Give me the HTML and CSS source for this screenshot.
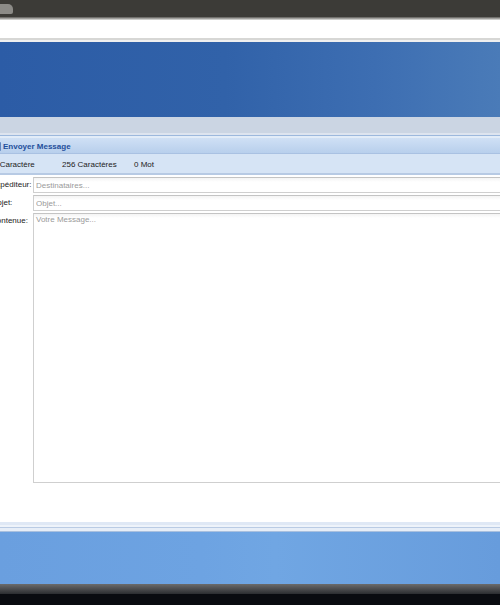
FILE: index.html
```html
<!DOCTYPE html>
<html lang="fr">
<head>
<meta charset="utf-8">
<title>Envoyer Message</title>
<link rel="stylesheet" href="styles.css">
</head>
<body>
<div class="screen">
  <div class="topbar"><span class="tab"></span></div>
  <div class="topsep"></div>
  <div class="addrbar"></div>
  <div class="addrsep"></div>
  <div class="banner"></div>
  <div class="subbar"></div>
  <div class="panel">
    <div class="panel-top"></div>
    <div class="panel-head"><span class="head-icon"></span><span class="head-title">Envoyer Message</span></div>
    <div class="stats">
      <span class="stat stat-first">0 Caractère</span>
      <span class="stat stat-second">256 Caractères</span>
      <span class="stat">0 Mot</span>
    </div>
    <div class="form">
      <div class="row">
        <label class="lbl">Expéditeur:</label>
        <input class="field" type="text" placeholder="Destinataires...">
      </div>
      <div class="row">
        <label class="lbl">Objet:</label>
        <input class="field" type="text" placeholder="Objet...">
      </div>
      <div class="row">
        <label class="lbl">Contenue:</label>
        <textarea class="field area" placeholder="Votre Message..."></textarea>
      </div>
    </div>
    <div class="panel-foot"></div>
  </div>
  <div class="desktop"></div>
  <div class="taskshade"></div>
  <div class="taskbar"></div>
</div>
</body>
</html>
```
FILE: styles.css
```css
html, body {
  margin: 0;
  padding: 0;
  width: 500px;
  height: 605px;
  overflow: hidden;
  background: #ffffff;
  font-family: "Liberation Sans", Arial, sans-serif;
}
.screen {
  display: flex;
  flex-direction: column;
  width: 500px;
  height: 605px;
  overflow: hidden;
}
.topbar {
  height: 17px;
  background: #3c3b37;
  display: flex;
  align-items: flex-start;
}
.tab {
  display: block;
  width: 13px;
  height: 10px;
  margin-top: 4px;
  background: #8c8b87;
  border-radius: 0 5px 2px 0;
}
.topsep {
  height: 3px;
  background: linear-gradient(#5a5955, #e4e4e2);
}
.addrbar {
  height: 18px;
  background: #ffffff;
}
.addrsep {
  height: 4px;
  background: linear-gradient(#d7d7d5 0 2px, #efefef 2px 4px);
}
.banner {
  height: 75px;
  background: linear-gradient(to right, #2c5ca6 0%, #3162a9 45%, #3d6eb2 75%, #4a7bb8 100%);
}
.subbar {
  height: 16px;
  background: #cbd5e3;
}
.panel {
  flex: 1;
  display: flex;
  flex-direction: column;
}
.panel-top {
  height: 5px;
  background: linear-gradient(#dde4ef 0 2px, #9cb8dd 2px 3px, #e2ecf8 3px 5px);
}
.panel-head {
  box-sizing: border-box;
  height: 16px;
  padding-top: 2px;
  background: linear-gradient(#cfe0f5, #b8cfec);
  border-bottom: 1px solid #a9c1e2;
  display: flex;
  align-items: center;
  gap: 2px;
}
.head-icon {
  display: block;
  width: 3px;
  height: 9px;
  margin-left: -2px;
  background: #5d86c2;
  border-radius: 1px;
}
.head-title {
  font-size: 8px;
  font-weight: bold;
  color: #1f4f9b;
}
.stats {
  box-sizing: border-box;
  height: 21px;
  padding-top: 1px;
  background: #d6e4f5;
  border-bottom: 2px solid #b7cae4;
  display: flex;
  align-items: center;
  font-size: 8px;
  color: #222;
}
.stat-first {
  margin-left: -7px;
  width: 69px;
}
.stat-second {
  width: 72px;
}
.form {
  display: flex;
  flex-direction: column;
  gap: 2px;
  padding-top: 2px;
  margin-left: -9px;
  width: 540px;
  height: 345px;
}
.row {
  display: flex;
  align-items: flex-start;
}
.lbl {
  width: 42px;
  flex: none;
  font-size: 8px;
  color: #222;
  line-height: 16px;
  white-space: nowrap;
}
.field {
  flex: 1;
  box-sizing: border-box;
  height: 16px;
  margin: 0;
  padding: 0 2px;
  border: 1px solid #cfcfcf;
  border-top-color: #c4c4c4;
  background: linear-gradient(#f4f4f4, #ffffff 4px);
  font-family: "Liberation Sans", Arial, sans-serif;
  font-size: 8px;
  color: #333;
  outline: none;
}
.field::placeholder {
  color: #9a9a9a;
}
.area {
  height: 270px;
  resize: none;
  padding: 1px 2px;
}
.panel-foot {
  height: 10px;
  background: linear-gradient(#dfe8f5 0 3px, #eef3fa 3px 5px, #b9cbe4 5px 6px, #e6edf7 6px 9px, #a9c0de 9px 10px);
}
.desktop {
  height: 52px;
  background: linear-gradient(to right, #6a9fdf 0%, #6da3e2 40%, #70a6e3 55%, #679cdc 100%);
}
.taskshade {
  height: 10px;
  background: linear-gradient(#6b6b6b, #2b2d31);
}
.taskbar {
  flex: 1;
  background: #090b10;
}
```
